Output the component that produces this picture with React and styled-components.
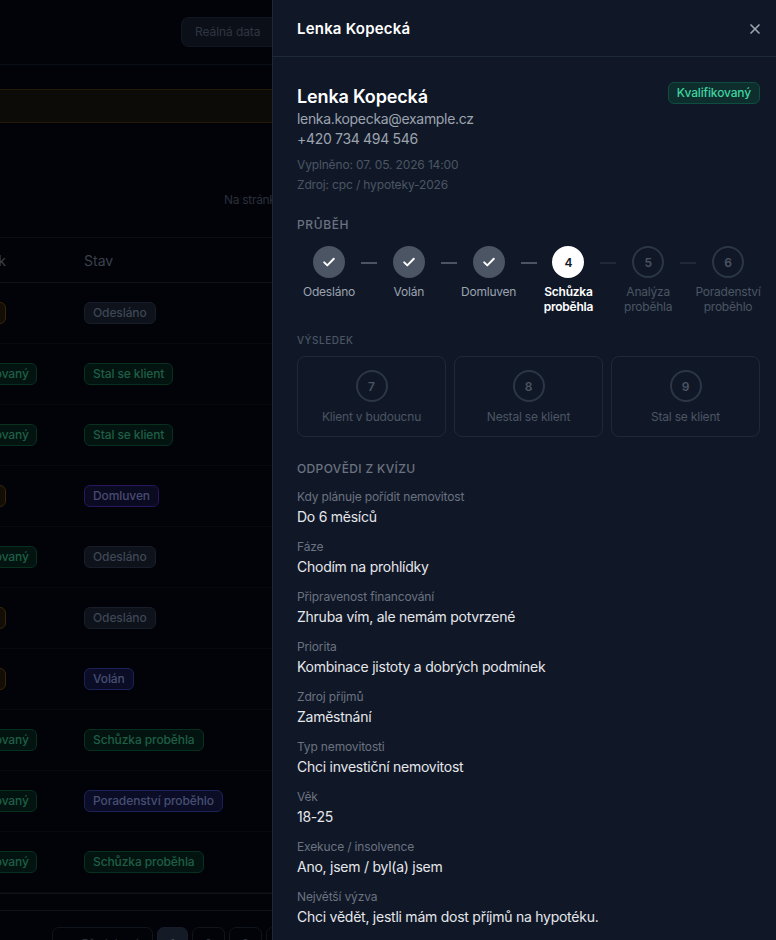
import React from "react";
import styled, { createGlobalStyle } from "styled-components";
import { X } from "lucide-react";

const GlobalStyle = createGlobalStyle`
  html, body {
    margin: 0;
    padding: 0;
    height: 100%;
    background: #020308;
    overflow: hidden;
  }
  * { box-sizing: border-box; }
  body {
    font-family: "Inter", "Liberation Sans", sans-serif;
  }
`;

const tones = {
  gray: { bg: "#0d121b", line: "#171d29", color: "#3f4654" },
  green: { bg: "#03130f", line: "#07301f", color: "#1e5f46" },
  blue: { bg: "#0a0d25", line: "#1a2258", color: "#474f72" },
  purple: { bg: "#0a0a20", line: "#2a1560", color: "#494a70" },
  amber: { bg: "#120d05", line: "#3a2608", color: "#6f5312" },
};

const Shell = styled.div`
  position: relative;
  width: 776px;
  height: 940px;
  overflow: hidden;
  background: #020308;
`;

const Page = styled.div`
  width: 272px;
  height: 940px;
  overflow: hidden;
`;

const TopBar = styled.div`
  height: 65px;
  padding: 17px 0 0 181px;
  border-bottom: 1px solid #0a0e16;
`;

const DataButton = styled.div`
  width: 120px;
  height: 30px;
  padding-left: 13px;
  border: 1px solid #121822;
  border-right: none;
  border-radius: 8px 0 0 8px;
  background: #0b1018;
  color: #2f3541;
  font-size: 12px;
  letter-spacing: -0.08px;
  line-height: 28px;
  white-space: nowrap;
`;

const Banner = styled.div`
  height: 34px;
  margin-top: 24px;
  background: #0c0b08;
  border-top: 1px solid #241808;
  border-bottom: 1px solid #241808;
`;

const PageSize = styled.div`
  height: 115px;
  padding: 69px 0 0 224px;
  border-bottom: 1px solid #0a0e16;
  color: #2a303b;
  font-size: 12px;
  letter-spacing: -0.3px;
  line-height: 16px;
  white-space: nowrap;
`;

const TableRow = styled.div`
  display: grid;
  grid-template-columns: 84px 1fr;
  align-items: center;
  height: ${(p) => p.$height}px;
  padding-bottom: ${(p) => p.$lift}px;
  border-bottom: 1px solid ${(p) => p.$line};
  overflow: hidden;
  white-space: nowrap;
`;

const HeadLeft = styled.div`
  margin-left: -55px;
  color: #3a414e;
  font-size: 14px;
`;

const HeadCell = styled.div`
  color: #3a414e;
  font-size: 14px;
`;

const LeftCell = styled.div`
  margin-left: -55px;
`;

const Badge = styled.span`
  display: inline-block;
  height: 22px;
  padding: 0 8px;
  border: 1px solid ${(p) => tones[p.$tone].line};
  border-radius: 6px;
  background: ${(p) => tones[p.$tone].bg};
  color: ${(p) => tones[p.$tone].color};
  font-size: 12px;
  font-weight: 500;
  letter-spacing: -0.1px;
  line-height: 20px;
  white-space: nowrap;
`;

const LeadBadge = styled(Badge)`
  width: ${(p) => (p.$tone === "green" ? 92 : 61)}px;
`;

const TableFoot = styled.div`
  height: 18px;
  border-top: 1px solid #0f131c;
  border-bottom: 1px solid #0f131c;
`;

const Pagination = styled.div`
  display: flex;
  gap: 4px;
  padding: 16px 0 0 52px;
`;

const PageButton = styled.div`
  flex: none;
  width: ${(p) => p.$width}px;
  height: 34px;
  border: 1px solid ${(p) => (p.$active ? "#171d28" : "#10141c")};
  border-radius: 7px;
  background: ${(p) => (p.$active ? "#151b26" : "transparent")};
  color: ${(p) => (p.$active ? "#4a505c" : "#2a303b")};
  font-size: 12px;
  line-height: 32px;
  text-align: center;
  white-space: nowrap;
`;

const Drawer = styled.aside`
  position: absolute;
  top: 0;
  right: 0;
  width: 504px;
  height: 940px;
  overflow: hidden;
  background: #101827;
  border-left: 1px solid #1e2938;
`;

const DrawerHead = styled.header`
  display: flex;
  align-items: center;
  justify-content: space-between;
  height: 57px;
  padding: 1px 13px 0 24px;
  border-bottom: 1px solid #1e2938;
`;

const DrawerTitle = styled.h2`
  margin: 0;
  color: #fff;
  font-size: 15px;
  font-weight: 600;
  letter-spacing: 0.2px;
  line-height: 20px;
`;

const CloseButton = styled.button`
  display: flex;
  padding: 0;
  border: none;
  background: none;
  color: #9ca3af;
`;

const DrawerBody = styled.div`
  padding: 26px 16px 0 24px;
`;

const Profile = styled.section`
  display: flex;
  align-items: flex-start;
  justify-content: space-between;
`;

const ProfileName = styled.h3`
  margin: 0 0 -2px;
  color: #fff;
  font-size: 18px;
  font-weight: 600;
  letter-spacing: -0.15px;
  line-height: 28px;
`;

const ContactLine = styled.div`
  color: #9ca3af;
  font-size: 14px;
  letter-spacing: -0.32px;
  line-height: 20px;
`;

const MetaLines = styled.div`
  margin-top: 6px;
`;

const MetaLine = styled.div`
  color: #4b5563;
  font-size: 12px;
  letter-spacing: -0.15px;
  line-height: 20px;
`;

const QualifiedBadge = styled.span`
  height: 22px;
  margin-top: -1px;
  padding: 0 8px;
  border: 1px solid #0f4d40;
  border-radius: 6px;
  background: #0d2e2d;
  color: #40d3a0;
  font-size: 12px;
  font-weight: 500;
  letter-spacing: -0.15px;
  line-height: 20px;
`;

const SectionTitle = styled.h4`
  margin: 0;
  color: ${(p) => (p.$dim ? "#4b5563" : "#6b7280")};
  font-size: ${(p) => (p.$dim ? 10 : 12)}px;
  font-weight: 500;
  letter-spacing: 0.05em;
  line-height: 16px;
  text-transform: uppercase;
`;

const ProgressTitle = styled(SectionTitle)`
  margin-top: 22px;
`;

const Steps = styled.div`
  display: grid;
  grid-template-columns: repeat(6, 64px);
  column-gap: 15.8px;
  margin: 13px 0 0 0;
`;

const Step = styled.div`
  position: relative;
  display: flex;
  flex-direction: column;
  align-items: center;
  gap: 6px;
`;

const Dash = styled.span`
  position: absolute;
  top: 16px;
  left: 64px;
  width: 16px;
  height: 2px;
  background: ${(p) => (p.$done ? "#4b5563" : "#1f2937")};
`;

const Circle = styled.div`
  display: flex;
  align-items: center;
  justify-content: center;
  width: 32px;
  height: 32px;
  border-radius: 50%;
  border: 2px solid
    ${(p) =>
      p.$state === "current" ? "#fff" : p.$state === "done" ? "#4b5563" : "#2b3646"};
  background: ${(p) =>
    p.$state === "current" ? "#fff" : p.$state === "done" ? "#4b5563" : "transparent"};
  color: ${(p) => (p.$state === "current" ? "#101827" : "#4b5563")};
  font-size: 12px;
  font-weight: 600;
`;

const StepLabel = styled.div`
  width: 74px;
  margin: 0 -5px;
  color: ${(p) =>
    p.$state === "current" ? "#fff" : p.$state === "done" ? "#9ca3af" : "#4b5563"};
  font-size: 12px;
  font-weight: ${(p) => (p.$state === "current" ? 600 : 400)};
  letter-spacing: -0.22px;
  line-height: 15px;
  text-align: center;
`;

const ResultTitle = styled(SectionTitle)`
  margin-top: 18px;
`;

const Results = styled.div`
  display: grid;
  grid-template-columns: repeat(3, 1fr);
  gap: 8px;
  margin-top: 8px;
`;

const ResultCard = styled.div`
  display: flex;
  flex-direction: column;
  align-items: center;
  gap: 7px;
  height: 81px;
  padding-top: 13px;
  border: 1px solid #1f2937;
  border-radius: 8px;
`;

const ResultLabel = styled.div`
  color: #4b5563;
  font-size: 12px;
  letter-spacing: -0.2px;
  line-height: 16px;
`;

const QuizTitle = styled(SectionTitle)`
  margin-top: 24px;
  letter-spacing: 0.03em;
`;

const Answers = styled.dl`
  margin: 10px 0 0;
`;

const Answer = styled.div`
  height: 50px;
  padding-top: 2px;
`;

const Question = styled.dt`
  color: #6b7280;
  font-size: 12px;
  letter-spacing: -0.15px;
  line-height: 16px;
`;

const Reply = styled.dd`
  margin: 2px 0 0;
  color: #e5e7eb;
  font-size: 14px;
  letter-spacing: -0.25px;
  line-height: 20px;
`;

const rows = [
  ["amber", "gray", "Odesláno"],
  ["green", "green", "Stal se klient"],
  ["green", "green", "Stal se klient"],
  ["amber", "purple", "Domluven"],
  ["green", "gray", "Odesláno"],
  ["amber", "gray", "Odesláno"],
  ["amber", "blue", "Volán"],
  ["green", "green", "Schůzka proběhla"],
  ["green", "blue", "Poradenství proběhlo"],
  ["green", "green", "Schůzka proběhla"],
];

const steps = [
  ["Odesláno", "done"],
  ["Volán", "done"],
  ["Domluven", "done"],
  ["Schůzka proběhla", "current"],
  ["Analýza proběhla", "todo"],
  ["Poradenství proběhlo", "todo"],
];

const outcomes = [
  [7, "Klient v budoucnu"],
  [8, "Nestal se klient"],
  [9, "Stal se klient"],
];

const answers = [
  ["Kdy plánuje pořídit nemovitost", "Do 6 měsíců"],
  ["Fáze", "Chodím na prohlídky"],
  ["Připravenost financování", "Zhruba vím, ale nemám potvrzené"],
  ["Priorita", "Kombinace jistoty a dobrých podmínek"],
  ["Zdroj příjmů", "Zaměstnání"],
  ["Typ nemovitosti", "Chci investiční nemovitost"],
  ["Věk", "18-25"],
  ["Exekuce / insolvence", "Ano, jsem / byl(a) jsem"],
  ["Největší výzva", "Chci vědět, jestli mám dost příjmů na hypotéku."],
];

const Check = () => (
  <svg width="16" height="16" viewBox="0 0 16 16" fill="none">
    <path d="M3.2 8.4l3.1 3 6.5-6.6" stroke="#fff" strokeWidth="2" strokeLinecap="round" strokeLinejoin="round" />
  </svg>
);

export default function App() {
  return (
    <Shell>
      <GlobalStyle />
      <Page>
        <TopBar>
          <DataButton>Reálná data</DataButton>
        </TopBar>
        <Banner />
        <PageSize>Na stránku</PageSize>
        <TableRow $height={45} $lift={0} $line="#0c1018">
          <HeadLeft>Výsledek</HeadLeft>
          <HeadCell>Stav</HeadCell>
        </TableRow>
        {rows.map(([lead, tone, label], i) => (
          <TableRow key={i} $height={61} $lift={1} $line="#07090f">
            <LeftCell>
              <LeadBadge $tone={lead}>{lead === "green" ? "Kvalifikovaný" : "Teplý"}</LeadBadge>
            </LeftCell>
            <div>
              <Badge $tone={tone}>{label}</Badge>
            </div>
          </TableRow>
        ))}
        <TableFoot />
        <Pagination>
          <PageButton $width={101}>← Předchozí</PageButton>
          <PageButton $width={31} $active>1</PageButton>
          <PageButton $width={33}>2</PageButton>
          <PageButton $width={33}>3</PageButton>
          <PageButton $width={33}>4</PageButton>
        </Pagination>
      </Page>

      <Drawer>
        <DrawerHead>
          <DrawerTitle>Lenka Kopecká</DrawerTitle>
          <CloseButton aria-label="Zavřít">
            <X size={16} strokeWidth={2.5} />
          </CloseButton>
        </DrawerHead>
        <DrawerBody>
          <Profile>
            <div>
              <ProfileName>Lenka Kopecká</ProfileName>
              <ContactLine>lenka.kopecka@example.cz</ContactLine>
              <ContactLine>+420 734 494 546</ContactLine>
              <MetaLines>
                <MetaLine>Vyplněno: 07. 05. 2026 14:00</MetaLine>
                <MetaLine>Zdroj: cpc / hypoteky-2026</MetaLine>
              </MetaLines>
            </div>
            <QualifiedBadge>Kvalifikovaný</QualifiedBadge>
          </Profile>

          <ProgressTitle>Průběh</ProgressTitle>
          <Steps>
            {steps.map(([label, state], i) => (
              <Step key={label}>
                <Circle $state={state}>{state === "done" ? <Check /> : i + 1}</Circle>
                {i < steps.length - 1 && <Dash $done={i < 3} />}
                <StepLabel $state={state}>{label}</StepLabel>
              </Step>
            ))}
          </Steps>

          <ResultTitle $dim>Výsledek</ResultTitle>
          <Results>
            {outcomes.map(([num, label]) => (
              <ResultCard key={num}>
                <Circle $state="todo">{num}</Circle>
                <ResultLabel>{label}</ResultLabel>
              </ResultCard>
            ))}
          </Results>

          <QuizTitle>Odpovědi z kvízu</QuizTitle>
          <Answers>
            {answers.map(([q, a]) => (
              <Answer key={q}>
                <Question>{q}</Question>
                <Reply>{a}</Reply>
              </Answer>
            ))}
          </Answers>
        </DrawerBody>
      </Drawer>
    </Shell>
  );
}
